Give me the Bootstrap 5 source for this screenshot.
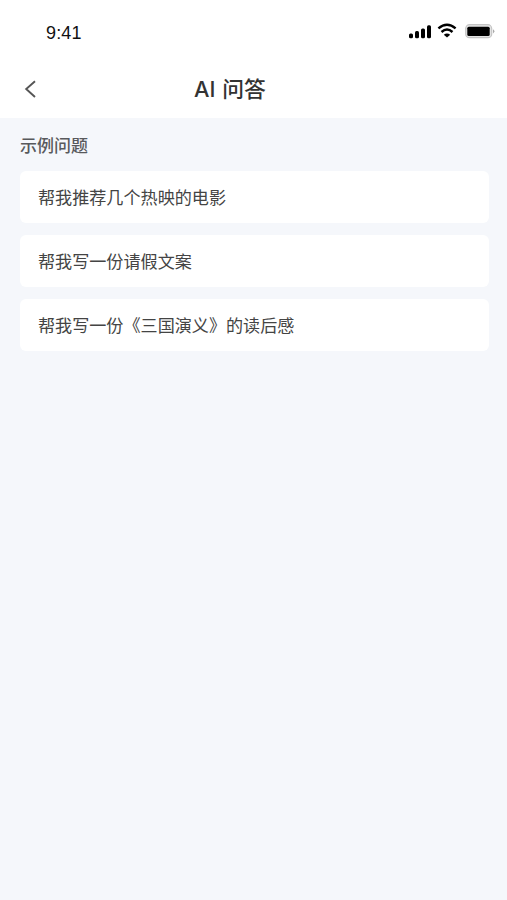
<!DOCTYPE html>
<html lang="zh-CN">
<head>
<meta charset="utf-8">
<meta name="viewport" content="width=device-width, initial-scale=1">
<title>AI 问答</title>
<link href="https://cdn.jsdelivr.net/npm/bootstrap@5.3.0/dist/css/bootstrap.min.css" rel="stylesheet">
<style>
body { background: #f5f7fb; color: #333; font-family: "Liberation Sans", "Noto Sans CJK SC", sans-serif; }
.status-bar { height: 60px; padding: 5px 12px 0 46px; }
.clock { font-size: 18px; line-height: 20px; color: #111; letter-spacing: .15px; }
.signals { margin-bottom: 3px; }
.title-bar { height: 58px; padding: 0 66px 0 19px; }
.side { width: 24px; height: 24px; }
.page-title { font-size: 21.8px; font-weight: 500; line-height: 30px; color: #333; font-family: "Inter", "Noto Sans CJK SC", sans-serif; word-spacing: 1px; }
main { padding: 14px 18px 0 20px; }
.section-title { font-size: 17px; font-weight: 500; line-height: 26px; color: #58595c; margin-bottom: 13.4px; font-family: "Noto Sans CJK SC", sans-serif; }
.questions { gap: 11.7px; }
.question { height: 52px; padding: 0 18px; border-radius: 6px; font-size: 17.1px; line-height: 26px; color: #444; font-family: "Noto Sans CJK SC", sans-serif; }
</style>
</head>
<body>
<header class="bg-white">
  <div class="status-bar d-flex align-items-center justify-content-between">
    <span class="clock">9:41</span>
    <svg class="signals" width="87" height="18" viewBox="408 22 87 18" aria-hidden="true">
      <g fill="#000">
        <rect x="409" y="33.4" width="4" height="4.9" rx="1.5"/>
        <rect x="415" y="31" width="4" height="7.3" rx="1.5"/>
        <rect x="421" y="28.4" width="4" height="9.9" rx="1.5"/>
        <rect x="427" y="25.2" width="4" height="13.1" rx="1.5"/>
        <path d="M443.8 34.8Q447 32.2 450.2 34.8L447 37.6Z"/>
      </g>
      <g fill="none" stroke="#000" stroke-width="2.4">
        <path d="M438.4 28.4Q447 20.9 455.6 28.4"/>
        <path d="M441.5 32Q447 27 452.5 32"/>
      </g>
      <rect x="465.7" y="24.7" width="26" height="13" rx="3.8" fill="#e4e4e4" stroke="#c4c4c4" stroke-width="1.2"/>
      <rect x="467.3" y="26.7" width="22.4" height="9.2" rx="1.5" fill="#000"/>
      <path d="M493 29.2Q495.8 31.2 493 33.4Z" fill="#aaa"/>
    </svg>
  </div>
  <div class="title-bar d-flex align-items-center justify-content-between">
    <a href="#" class="side d-block" aria-label="返回"><svg class="d-block" width="24" height="24" viewBox="19 77 24 24"><path d="M35 81.2L26.2 89L35 97" fill="none" stroke="#555" stroke-width="1.9"/></svg></a>
    <h1 class="page-title m-0">AI 问答</h1>
    <span class="side"></span>
  </div>
</header>
<main>
  <h2 class="section-title">示例问题</h2>
  <div class="questions d-flex flex-column">
    <div class="question bg-white d-flex align-items-center">帮我推荐几个热映的电影</div>
    <div class="question bg-white d-flex align-items-center">帮我写一份请假文案</div>
    <div class="question bg-white d-flex align-items-center">帮我写一份《三国演义》的读后感</div>
  </div>
</main>
<script src="https://cdn.jsdelivr.net/npm/bootstrap@5.3.0/dist/js/bootstrap.bundle.min.js"></script>
</body>
</html>
